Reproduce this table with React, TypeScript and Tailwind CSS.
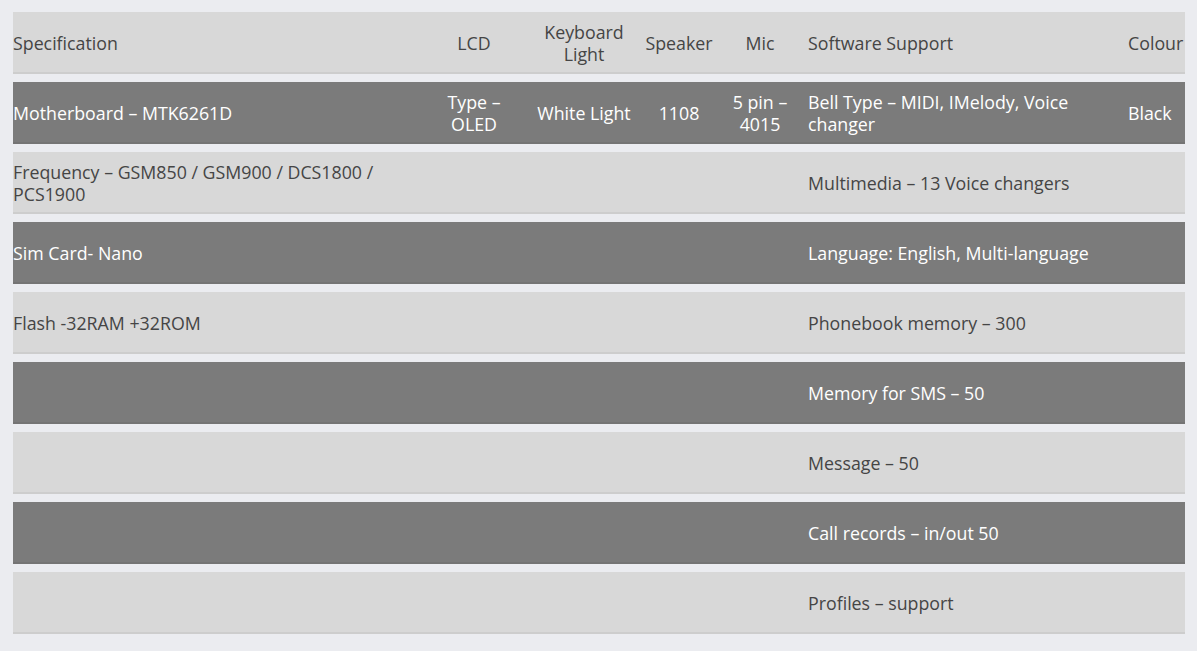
import React from "react";

type Row = [string, string, string, string, string, string, string];

const rows: Row[] = [
  ["Specification", "LCD", "Keyboard Light", "Speaker", "Mic", "Software Support", "Colour"],
  ["Motherboard – MTK6261D", "Type – OLED", "White Light", "1108", "5 pin – 4015", "Bell Type – MIDI, IMelody, Voice changer", "Black"],
  ["Frequency – GSM850 / GSM900 / DCS1800 / PCS1900", "", "", "", "", "Multimedia – 13 Voice changers", ""],
  ["Sim Card- Nano", "", "", "", "", "Language: English, Multi-language", ""],
  ["Flash -32RAM +32ROM", "", "", "", "", "Phonebook memory – 300", ""],
  ["", "", "", "", "", "Memory for SMS – 50", ""],
  ["", "", "", "", "", "Message – 50", ""],
  ["", "", "", "", "", "Call records – in/out 50", ""],
  ["", "", "", "", "", "Profiles – support", ""],
];

export default function App() {
  return (
    <div
      className="min-h-screen w-full bg-[#ebecf0] pt-[12px]"
      style={{ fontFamily: '"Open Sans", "Noto Sans", sans-serif' }}
    >
      <div className="mx-[13px] flex w-[1172px] flex-col gap-[8px]">
        {rows.map((r, i) => {
          const dark = i % 2 === 1;
          return (
            <div
              key={i}
              className={
                dark
                  ? "flex h-[62px] items-center border-b-2 border-[#747474] bg-[#7b7b7b] pt-[2px] text-[17.8px] leading-[22px] text-white"
                  : "flex h-[62px] items-center border-b-2 border-[#cdcdcd] bg-[#d8d8d8] pt-[2px] text-[17.8px] leading-[22px] text-[#454545]"
              }
            >
              <div className="w-[427px] pr-[30px]">{r[0]}</div>
              <div className="w-[68px] text-center">{r[1]}</div>
              <div className="w-[152px] px-[20px] text-center">{r[2]}</div>
              <div className="flex w-[38px] justify-center whitespace-nowrap">{r[3]}</div>
              <div className="ml-[24px] w-[76px] px-[8px] text-center">{r[4]}</div>
              <div className="ml-[10px] w-[304px]">{r[5]}</div>
              <div className="ml-[16px] w-[57px] whitespace-nowrap">{r[6]}</div>
            </div>
          );
        })}
      </div>
    </div>
  );
}
